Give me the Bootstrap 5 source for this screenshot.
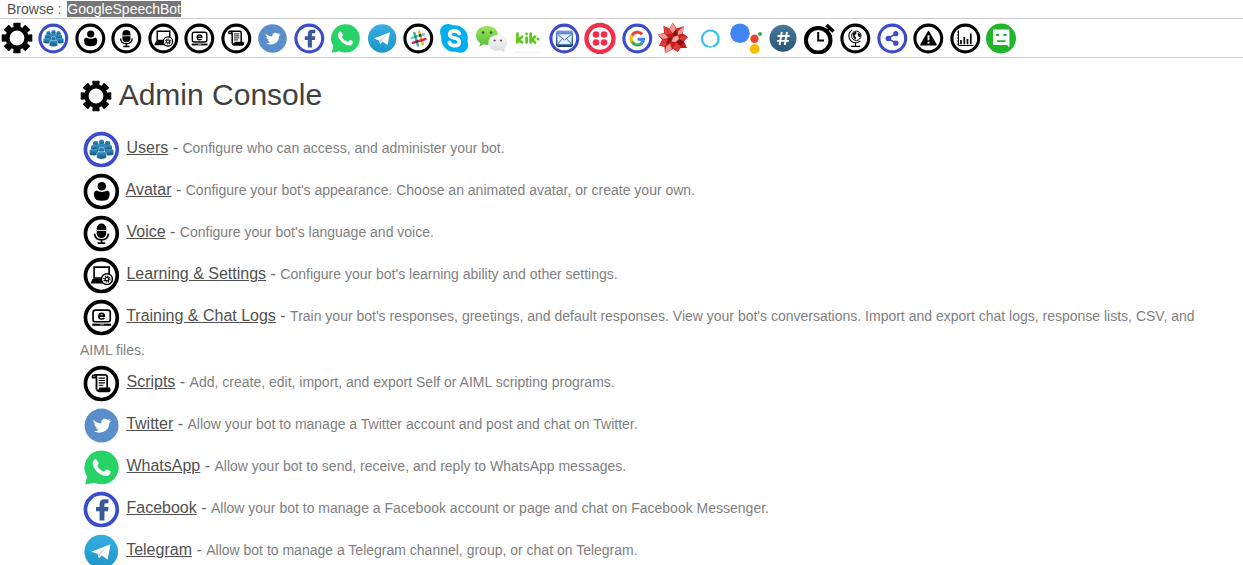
<!DOCTYPE html>
<html lang="en">
<head>
<meta charset="utf-8">
<meta name="viewport" content="width=device-width, initial-scale=1">
<title>Admin Console</title>
<link href="https://cdn.jsdelivr.net/npm/bootstrap@5.3.0/dist/css/bootstrap.min.css" rel="stylesheet">
<style>
body{font-family:"Liberation Sans",Arial,sans-serif;font-size:16px;line-height:24px;color:#666;background:#fff}
a{color:#505050}
.crumbs{font-size:14px;line-height:18px;padding:0 7px;border-bottom:1px solid #ccc}
.crumbs .current{background:#767676;color:#fff;margin-left:2px}
.toolbar{padding:3px 1px;border-bottom:1px solid #ccc;line-height:20px}
.toolbar svg,h1 svg{width:32px;height:32px;vertical-align:middle}
.content{padding:21px 32px 0 80px}
h1{font-size:30px;line-height:32px;color:#404040;margin:0 0 16px;font-weight:400}
h1 svg{vertical-align:-7px}
.tools svg{width:38px;height:38px;margin:2px;vertical-align:middle}
.tools .about{font-size:14px;color:#808080}
</style>
</head>
<body>
<svg class="position-absolute" width="0" height="0" aria-hidden="true">
<defs>
<linearGradient id="gPeople" x2="0" y2="1"><stop offset="0" stop-color="#3a9ad0"/><stop offset="1" stop-color="#0f4f78"/></linearGradient>
<linearGradient id="gTele" x2="0" y2="1"><stop offset="0" stop-color="#37aee2"/><stop offset="1" stop-color="#1e96c8"/></linearGradient>
<linearGradient id="gMail" x2="0" y2="1"><stop offset="0" stop-color="#7ea3dc"/><stop offset=".5" stop-color="#2c5cab"/><stop offset="1" stop-color="#173f86"/></linearGradient>
<linearGradient id="gHash" x2="0" y2="1"><stop offset="0" stop-color="#46799b"/><stop offset="1" stop-color="#2b5777"/></linearGradient>
<linearGradient id="gWe" x2="0" y2="1"><stop offset="0" stop-color="#9be65a"/><stop offset="1" stop-color="#55bf3c"/></linearGradient>
<linearGradient id="gWe2" x2="0" y2="1"><stop offset="0" stop-color="#f8f9fa"/><stop offset="1" stop-color="#d9dde0"/></linearGradient>
<g id="ring"><circle cx="16.3" cy="16.500" r="13.4" fill="#fff" stroke="#000" stroke-width="3.100"/></g>
<g id="blueRing"><circle cx="16.3" cy="16.500" r="13.4" fill="#fff" stroke="#3b4bcb" stroke-width="3.100"/></g>
<g id="person"><circle cx="0" cy="-2.800" r="2.200"/><path d="M-2.500-1.500H2.500L3.600-.3V3.200Q0 4.800-3.600 3.200V-.3Z"/></g>
</defs>
<symbol id="gear" viewBox="0 0 32 32"><g fill="#000"><path id="tooth" d="M12.300 1.500Q12.300 .7 13.100 .7H18.900Q19.700 .7 19.700 1.500L19.300 7H12.700Z"/><use href="#tooth" transform="rotate(45 16 16)"/><use href="#tooth" transform="rotate(90 16 16)"/><use href="#tooth" transform="rotate(135 16 16)"/><use href="#tooth" transform="rotate(180 16 16)"/><use href="#tooth" transform="rotate(225 16 16)"/><use href="#tooth" transform="rotate(270 16 16)"/><use href="#tooth" transform="rotate(315 16 16)"/></g><circle cx="16" cy="16" r="9.500" fill="#fff" stroke="#000" stroke-width="4.200"/></symbol>
<symbol id="users" viewBox="0 0 32 32"><use href="#blueRing"/><g fill="url(#gPeople)"><use href="#person" x="16.500" y="13"/><use href="#person" x="11.500" y="14"/><use href="#person" x="21.500" y="14"/><use href="#person" x="10" y="17.500"/><use href="#person" x="23" y="17.500"/></g><g fill="url(#gPeople)" stroke="#fff" stroke-width=".3"><use href="#person" transform="translate(16.500 20) scale(1.150)"/></g></symbol>
<symbol id="avatar" viewBox="0 0 32 32"><use href="#ring"/><circle cx="16.700" cy="12" r="3.600"/><path d="M12 15.600Q16.700 18 21.400 15.600Q23.300 16.200 23.300 18.200Q23.300 22 21.200 23.600Q16.700 24.800 12.200 23.600Q10 22 10 18.200Q10 16.200 12 15.600Z"/></symbol>
<symbol id="voice" viewBox="0 0 32 32"><use href="#ring"/><rect x="12.400" y="8" width="8" height="12.300" rx="4"/><path d="M12.400 13.800H20.400" stroke="#fff" stroke-width=".8"/><path d="M10.500 16.500Q11.200 21.800 16.400 21.800T22.300 16.500M16.400 21.800V24.300M13.200 24.500H19.600" fill="none" stroke="#000" stroke-width="1.400"/></symbol>
<symbol id="learning" viewBox="0 0 32 32"><use href="#ring"/><path d="M10.200 18.500V9.300H22.800V18.500Z" fill="#fff" stroke="#000" stroke-width="1.400"/><path d="M9 19H20V23.200H7.200Z"/><circle cx="21" cy="19.500" r="4.600" fill="#fff" stroke="#000" stroke-width="1.200"/><circle cx="21" cy="19.500" r="1.500" fill="none" stroke="#000" stroke-width="1.100"/><circle cx="21" cy="19.500" r="2.500" fill="none" stroke="#000" stroke-width="1.200" stroke-dasharray="1 .96"/></symbol>
<symbol id="training" viewBox="0 0 32 32"><use href="#ring"/><rect x="9.300" y="10.200" width="14.500" height="9.800" rx="2" fill="#fff" stroke="#000" stroke-width="1.400"/><path d="M14.200 15.300H18.800Q18.700 12.900 16.500 12.900T14.200 15.400T16.600 17.700Q18 17.700 18.700 16.900" fill="none" stroke="#000" stroke-width="1.400"/><path d="M8.700 22.500H24.500" stroke="#000" stroke-width="1.800"/><path d="M15 22.500H18.500" stroke="#999" stroke-width=".8"/></symbol>
<symbol id="scripts" viewBox="0 0 32 32"><use href="#ring"/><path d="M12.200 21.500V11.500Q12 9.300 10.200 9.300T9 11.500H12M10.200 9.200H20Q21.200 9.500 21.200 11V20" fill="#fff" stroke="#000" stroke-width="1.500"/><path d="M14 11.900H19.300M14 13.900H19.300M14 15.900H19.300M14 17.900H18" stroke="#000" stroke-width=".9"/><path d="M14.500 19.800H23.500Q25 23.300 22.600 23.800H14Q11.900 23.500 11.700 21.200H14.200Z"/></symbol>
<symbol id="twitter" viewBox="0 0 32 32"><circle cx="16.500" cy="16.500" r="14.300" fill="#5a8ecb"/><path fill="#fff" d="M9.500 11.500Q12.300 14.600 16.300 14.600C15.700 11.600 19.300 9.600 21.600 11.700L23.700 11L22.800 12.700L24.600 12.400L23 14.200C23.200 20.500 16.500 24.600 10.200 21.200Q12.800 21.300 14.200 20Q12 19.700 11.500 18H12.700Q10.200 16.900 10.300 14.800L11.400 15.100Q9 13.300 9.500 11.500Z"/></symbol>
<symbol id="whatsapp" viewBox="0 0 32 32"><path fill="#27d367" d="M16.600 2.200A14.200 14.200 0 1 1 10.500 29.200L2.700 30.800L4.300 24A14.200 14.200 0 0 1 16.600 2.200Z"/><path fill="#fff" d="M11.800 9.200L14 12.700Q14.200 13.200 12.900 14.900Q14.800 18.800 18.800 20L20.400 18.200Q21 17.700 24 19.500C24.300 22 22.400 23.500 20.500 23.500C15 23.500 9.300 17.500 9 13C9 11 10.500 9 11.800 9.200Z"/></symbol>
<symbol id="facebook" viewBox="0 0 32 32"><use href="#blueRing"/><path fill="#3b5998" d="M14.800 25.600V17.900H11.800V14.300H14.800V12Q14.800 7.800 18.800 7.800H22.300V11.200H20Q18.900 11.200 18.900 12.300V14.300H22.300L21.900 17.900H18.900V25.600Z"/></symbol>
<symbol id="telegram" viewBox="0 0 32 32"><circle cx="16.200" cy="16.500" r="14.200" fill="url(#gTele)"/><path fill="#fff" d="M7.800 16.600L24 10.300L21.600 23.100L16.700 19.700L14.200 22.200L13.200 18.400Z"/><path fill="#c8daea" d="M13.200 18.400L21.600 12.300L15.300 19L14.200 22.200Z"/></symbol>
<symbol id="slack" viewBox="0 0 32 32"><use href="#ring"/><g transform="rotate(-16 16.500 16.500)" stroke-width="2.500" stroke-linecap="round" fill="none"><path stroke="#70cadb" d="M10 14H23"/><path stroke="#e01765" d="M10 19H23"/><path stroke="#3eb890" d="M14 10V23"/><path stroke="#ecb32d" d="M19 10V23"/></g><g transform="rotate(-16 16.500 16.500)"><path fill="#472a49" d="M12.800 17.800h2.400v2.400h-2.400ZM17.800 12.800h2.400v2.400h-2.400Z"/><path fill="#1a937d" d="M12.800 12.800h2.400v2.400h-2.400Z"/><path fill="#cc2027" d="M17.800 17.800h2.400v2.400h-2.400Z"/></g></symbol>
<symbol id="skype" viewBox="0 0 32 32"><g fill="#00aff0"><circle cx="16.500" cy="16.500" r="13.300"/><circle cx="10" cy="10" r="8"/><circle cx="22.500" cy="23" r="7.700"/></g><path fill="none" stroke="#fff" stroke-width="3.700" stroke-linecap="round" d="M21.200 11.600Q20 8.900 16.200 8.900Q11.700 9 11.700 12.300Q11.700 15.200 16.300 16Q21.300 16.900 21.300 20Q21.300 23.700 16.700 23.700Q12.400 23.700 11.300 20.500"/></symbol>
<symbol id="wechat" viewBox="0 0 32 32"><path fill="url(#gWe)" d="M12 4C18.500 4 23 8 23 13.500S18.500 22.900 12 22.900L8.500 22.300L4.300 24.800L5.200 21Q1 18 1 13.400C1 8 5.500 4 12 4Z"/><circle cx="8" cy="10.500" r="1.300" fill="#36602d"/><circle cx="16" cy="10.500" r="1.300" fill="#36602d"/><path fill="url(#gWe2)" stroke="#dfe2e4" stroke-width=".4" d="M22.700 13C28.400 13 31.800 16.500 31.800 20.800Q31.800 24.500 28.900 26.700L29.600 29.900L26 28.100Q24 28.700 22.500 28.600C17 28.600 13.500 25 13.500 20.800S17 13 22.700 13Z"/><circle cx="19.600" cy="18.500" r="1.100" fill="#555"/><circle cx="26" cy="18.500" r="1.100" fill="#555"/></symbol>
<symbol id="kik" viewBox="0 0 32 32"><rect x="2.300" y="2.300" width="28" height="28" rx="2" fill="#fff"/><path stroke="#eee" d="M3 30.300H30"/><path fill="none" stroke="#57ca12" stroke-width="2.700" stroke-linecap="round" d="M6.500 11.500V20.500M11.200 14.700L7.700 17.700L11.200 20.500M15.600 15.700V20.500M19.600 11.500V20.500M24 14.700L20.800 17.700L24 20.500"/><circle cx="15.600" cy="12" r="1.400" fill="#57ca12"/><circle cx="27" cy="17" r="1.500" fill="#57ca12"/></symbol>
<symbol id="mail" viewBox="0 0 32 32"><use href="#blueRing"/><rect x="8" y="8.500" width="17" height="16.500" rx="2.500" fill="url(#gMail)"/><rect x="9.300" y="12.300" width="14.400" height="10" fill="#e6eef8"/><path fill="none" stroke="#3d67a9" stroke-width="1" d="M9.500 12.300L16.500 18L23.600 12.300M9.700 22L14.500 16.700M23.400 22L18.500 16.700"/></symbol>
<symbol id="twilio" viewBox="0 0 32 32"><circle cx="16" cy="16.500" r="13.500" fill="#fff" stroke="#f22f46" stroke-width="4.400"/><g fill="#f22f46"><circle cx="12" cy="12.500" r="3.300"/><circle cx="20" cy="12.500" r="3.300"/><circle cx="12" cy="20.500" r="3.300"/><circle cx="20" cy="20.500" r="3.300"/></g></symbol>
<symbol id="google" viewBox="0 0 32 32"><use href="#blueRing"/><g fill="none" stroke-width="3"><path stroke="#ea4335" d="M21.200 12.300A6.200 6.200 0 0 0 11 13.600"/><path stroke="#fbbc05" d="M11.200 13.400A6.200 6.200 0 0 0 11.200 20.200"/><path stroke="#34a853" d="M11 19.800A6.200 6.200 0 0 0 20.700 21.300"/><path stroke="#4285f4" d="M20.500 21.500A6 6 0 0 0 22.600 17.200H16.600"/></g></symbol>
<symbol id="wolfram" viewBox="0 0 32 32"><path fill="#c41d1d" d="M15.700 .6L19.500 6.500L26.800 4.300L25.800 11.500L31 15L27 19.300L30 26L23.500 26L20.600 30L16 27L8 31.500L7.500 25L2 23.500L5 17.700L.8 12.500L7 11L6.500 4L12.500 6.500Z"/><g fill="#f19a93"><path d="M15.700 .6L19 7L15.700 11.500L12.500 7ZM21 9L26.800 4.300L25.500 11.500L21 13ZM.8 12.500L7.500 11.500L11.500 16L6 17ZM8 31.500L9 24.500L13 21.500L15 27Z"/></g><g fill="#e03a36"><path d="M6.500 4L12.500 7L15 12L8 12ZM31 15L24 14L22 17L27 19ZM2 23.500L6 17.700L12 17L8 24ZM20.600 30L16 26L19 20.500L23.500 25Z"/></g><g fill="#8d1010"><path d="M15.700 11.500L19 8L20.500 13L16.500 15ZM11 16L15 15.500L13 20.500L9 22ZM19 20L22 17L27 20L24 24Z"/></g><path fill="#f6aaa5" d="M16.500 15L21 13.500L22 17L18.500 20L14.500 19.500Z"/></symbol>
<symbol id="alexa" viewBox="0 0 32 32"><path fill="none" stroke="#31c4f3" stroke-width="2.100" d="M14.300 24.800A8.300 8.300 0 1 1 19 24.600"/><path fill="#31c4f3" d="M13.800 23.700Q17 25.200 20 23Q18 25.600 16 26.200Z"/></symbol>
<symbol id="assistant" viewBox="0 0 32 32"><circle cx="10" cy="11.200" r="9.800" fill="#4285f4"/><circle cx="24.500" cy="16.700" r="4.200" fill="#ea4335"/><circle cx="24.700" cy="27" r="4.900" fill="#fbbc05"/><circle cx="30" cy="12" r="2" fill="#34a853"/></symbol>
<symbol id="hash" viewBox="0 0 32 32"><circle cx="16" cy="16.300" r="13.500" fill="url(#gHash)"/><path fill="none" stroke="#fff" stroke-width="1.900" d="M14.800 10L12.600 23M20 10L17.800 23M10.500 14H22.700M9.900 18.900H22"/></symbol>
<symbol id="timer" viewBox="0 0 32 32"><circle cx="15.200" cy="18.200" r="12.300" fill="#fff" stroke="#000" stroke-width="4"/><path fill="none" stroke="#000" stroke-width="2" d="M15.200 10V18.500H21"/><path stroke="#000" stroke-width="3.600" d="M23.500 3L30.500 9.500"/><path stroke="#000" stroke-width="2.500" d="M23.600 9.700L27 5.500"/></symbol>
<symbol id="web" viewBox="0 0 32 32"><use href="#ring"/><circle cx="17.300" cy="13.800" r="4.700" fill="#fff" stroke="#000" stroke-width="1"/><path d="M13.500 11.500L16.500 9.600L17.800 11L15.500 13.700L17.300 15.800L16 17.800L14.500 15.300ZM19 10.500L21.400 12.500L21.200 15.500L19.500 14.500L18.800 12.500Z"/><path fill="none" stroke="#000" stroke-width="1.100" d="M13 7.800Q8.500 11.500 10.400 16.700Q13.200 21.800 18.500 20.500L21.400 18.900M16.500 21V24M12.200 24.400H21.300"/></symbol>
<symbol id="share" viewBox="0 0 32 32"><use href="#blueRing"/><path fill="none" stroke="#3b4bcb" stroke-width="1.500" d="M20 11.500L12 16.500L20 21.300"/><g fill="#3b4bcb"><circle cx="12.400" cy="16.500" r="2.800"/><circle cx="19.800" cy="11.700" r="2.600"/><circle cx="19.800" cy="21.200" r="2.600"/></g></symbol>
<symbol id="issues" viewBox="0 0 32 32"><use href="#ring"/><path stroke="#000" stroke-width="1.500" stroke-linejoin="round" d="M16.500 9.600L24 22.700H9Z"/><path stroke="#fff" stroke-width="1.900" d="M16.500 13.300V18.300M16.500 19.700V21.500"/></symbol>
<symbol id="analytics" viewBox="0 0 32 32"><use href="#ring"/><path fill="none" stroke="#000" stroke-width="1" d="M9.500 8.500V23.500H24.500M7.800 10H9.500M7.800 13H9.500M7.800 16H9.500M7.800 19H9.500M7.800 22H9.500"/><path stroke="#000" stroke-width="1.700" d="M12 18V22.300M15.300 15V22.300M18.500 17V22.300M21.800 11.500V22.300"/></symbol>
<symbol id="libre" viewBox="0 0 32 32"><circle cx="16" cy="16.500" r="15" fill="#22b52b"/><path fill="#fff" d="M8 7.500H24.400V25.500L22 23H8Z"/><path fill="none" stroke="#22b52b" stroke-width="1.800" d="M11 13H14M18.500 13H21.500M12 19.200H20.500"/></symbol>
</svg>

<nav class="crumbs" aria-label="Breadcrumb"><a class="text-decoration-none" href="#">Browse</a> : <a class="current text-decoration-none" href="#">GoogleSpeechBot</a></nav>

<nav class="toolbar" aria-label="Tools">
<a href="#" aria-label="Admin Console"><svg><use href="#gear"/></svg></a>
<a href="#" aria-label="Users"><svg><use href="#users"/></svg></a>
<a href="#" aria-label="Avatar"><svg><use href="#avatar"/></svg></a>
<a href="#" aria-label="Voice"><svg><use href="#voice"/></svg></a>
<a href="#" aria-label="Learning"><svg><use href="#learning"/></svg></a>
<a href="#" aria-label="Training"><svg><use href="#training"/></svg></a>
<a href="#" aria-label="Scripts"><svg><use href="#scripts"/></svg></a>
<a href="#" aria-label="Twitter"><svg><use href="#twitter"/></svg></a>
<a href="#" aria-label="Facebook"><svg><use href="#facebook"/></svg></a>
<a href="#" aria-label="WhatsApp"><svg><use href="#whatsapp"/></svg></a>
<a href="#" aria-label="Telegram"><svg><use href="#telegram"/></svg></a>
<a href="#" aria-label="Slack"><svg><use href="#slack"/></svg></a>
<a href="#" aria-label="Skype"><svg><use href="#skype"/></svg></a>
<a href="#" aria-label="WeChat"><svg><use href="#wechat"/></svg></a>
<a href="#" aria-label="Kik"><svg><use href="#kik"/></svg></a>
<a href="#" aria-label="Email"><svg><use href="#mail"/></svg></a>
<a href="#" aria-label="Twilio"><svg><use href="#twilio"/></svg></a>
<a href="#" aria-label="Google"><svg><use href="#google"/></svg></a>
<a href="#" aria-label="Wolfram Alpha"><svg><use href="#wolfram"/></svg></a>
<a href="#" aria-label="Alexa"><svg><use href="#alexa"/></svg></a>
<a href="#" aria-label="Google Assistant"><svg><use href="#assistant"/></svg></a>
<a href="#" aria-label="IRC"><svg><use href="#hash"/></svg></a>
<a href="#" aria-label="Timers"><svg><use href="#timer"/></svg></a>
<a href="#" aria-label="Web"><svg><use href="#web"/></svg></a>
<a href="#" aria-label="Share"><svg><use href="#share"/></svg></a>
<a href="#" aria-label="Issues"><svg><use href="#issues"/></svg></a>
<a href="#" aria-label="Analytics"><svg><use href="#analytics"/></svg></a>
<a href="#" aria-label="Chat"><svg><use href="#libre"/></svg></a>
</nav>

<main class="content">
<h1><svg aria-hidden="true"><use href="#gear"/></svg> Admin Console</h1>
<ul class="tools list-unstyled mb-0">
<li><svg aria-hidden="true"><use href="#users"/></svg> <a href="#">Users</a> - <span class="about">Configure who can access, and administer your bot.</span></li>
<li><svg aria-hidden="true"><use href="#avatar"/></svg> <a href="#">Avatar</a> - <span class="about">Configure your bot's appearance. Choose an animated avatar, or create your own.</span></li>
<li><svg aria-hidden="true"><use href="#voice"/></svg> <a href="#">Voice</a> - <span class="about">Configure your bot's language and voice.</span></li>
<li><svg aria-hidden="true"><use href="#learning"/></svg> <a href="#">Learning &amp; Settings</a> - <span class="about">Configure your bot's learning ability and other settings.</span></li>
<li><svg aria-hidden="true"><use href="#training"/></svg> <a href="#">Training &amp; Chat Logs</a> - <span class="about">Train your bot's responses, greetings, and default responses. View your bot's conversations. Import and export chat logs, response lists, CSV, and AIML files.</span></li>
<li><svg aria-hidden="true"><use href="#scripts"/></svg> <a href="#">Scripts</a> - <span class="about">Add, create, edit, import, and export Self or AIML scripting programs.</span></li>
<li><svg aria-hidden="true"><use href="#twitter"/></svg> <a href="#">Twitter</a> - <span class="about">Allow your bot to manage a Twitter account and post and chat on Twitter.</span></li>
<li><svg aria-hidden="true"><use href="#whatsapp"/></svg> <a href="#">WhatsApp</a> - <span class="about">Allow your bot to send, receive, and reply to WhatsApp messages.</span></li>
<li><svg aria-hidden="true"><use href="#facebook"/></svg> <a href="#">Facebook</a> - <span class="about">Allow your bot to manage a Facebook account or page and chat on Facebook Messenger.</span></li>
<li><svg aria-hidden="true"><use href="#telegram"/></svg> <a href="#">Telegram</a> - <span class="about">Allow bot to manage a Telegram channel, group, or chat on Telegram.</span></li>
</ul>
</main>
</body>
</html>
